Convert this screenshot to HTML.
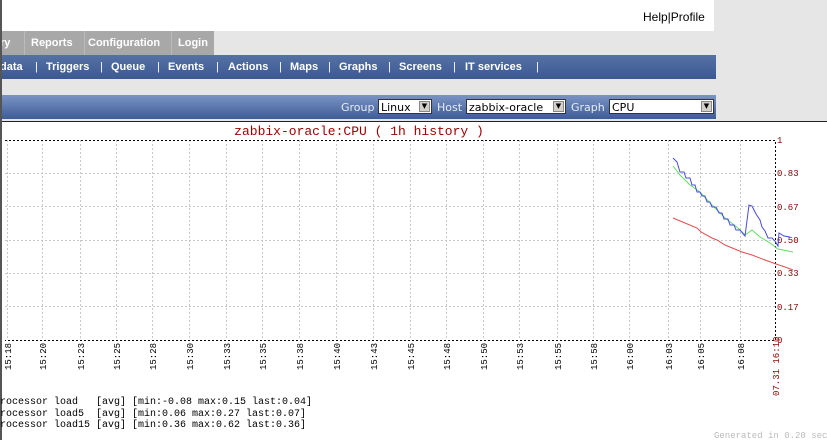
<!DOCTYPE html>
<html><head><style>
body{margin:0;width:827px;height:440px;overflow:hidden;background:#fff;position:relative;font-family:"Liberation Sans",sans-serif}
.a{position:absolute}
.nav{position:absolute;font-size:11px;font-weight:bold;color:#fff;white-space:nowrap;top:61px}
.tab{position:absolute;font-size:11px;font-weight:bold;color:#fff;white-space:nowrap;top:37px}
.sp{position:absolute;top:61px;font-size:11px;color:#fff}
.sel{position:absolute;top:99px;height:15px;background:#fff;border:1px solid #333;font-size:11px;font-family:"DejaVu Sans",sans-serif;line-height:15px;padding-left:2px;box-sizing:border-box}
.sel i{position:absolute;right:1px;top:1px;width:11px;height:11px;background:#d4d0c8;border:1px solid #888;box-sizing:border-box;font-style:normal;font-size:7px;line-height:9px;text-align:center;color:#000}
.lbl{position:absolute;top:101px;font-size:11px;color:#e8ecf4;font-family:"DejaVu Sans",sans-serif}
</style></head><body>
<div class="a" style="left:0;top:0;width:827px;height:122px;background:#e6e6e6"></div>
<div class="a" style="left:0;top:0;width:714px;height:31px;background:#fff"></div>
<div class="a" style="left:643px;top:10px;font-size:12px;color:#000">Help|Profile</div>
<div class="a" style="left:0;top:31px;width:214px;height:24px;background:#a8a8a8"></div>
<div class="a" style="left:24px;top:31px;width:1px;height:24px;background:#bbb"></div>
<div class="a" style="left:84px;top:31px;width:1px;height:24px;background:#bbb"></div>
<div class="a" style="left:171px;top:31px;width:1px;height:24px;background:#bbb"></div>
<div class="tab" style="left:0">ry</div>
<div class="tab" style="left:31px">Reports</div>
<div class="tab" style="left:88px">Configuration</div>
<div class="tab" style="left:178px">Login</div>
<div class="a" style="left:0;top:55px;width:716px;height:24px;background:linear-gradient(#5571a4,#3b5a92)"></div>
<div class="nav" style="left:0">data</div><div class="sp" style="left:35px">|</div>
<div class="nav" style="left:46px">Triggers</div><div class="sp" style="left:100px">|</div>
<div class="nav" style="left:111px">Queue</div><div class="sp" style="left:157px">|</div>
<div class="nav" style="left:168px">Events</div><div class="sp" style="left:216px">|</div>
<div class="nav" style="left:228px">Actions</div><div class="sp" style="left:279px">|</div>
<div class="nav" style="left:290px">Maps</div><div class="sp" style="left:328px">|</div>
<div class="nav" style="left:339px">Graphs</div><div class="sp" style="left:388px">|</div>
<div class="nav" style="left:399px">Screens</div><div class="sp" style="left:453px">|</div>
<div class="nav" style="left:465px">IT services</div><div class="sp" style="left:536px">|</div>
<div class="a" style="left:0;top:95px;width:716px;height:24px;background:linear-gradient(#7a94c4,#3d5d96)"></div>
<div class="lbl" style="left:341px">Group</div>
<div class="sel" style="left:378px;width:54px">Linux<i>▼</i></div>
<div class="lbl" style="left:437px">Host</div>
<div class="sel" style="left:466px;width:100px">zabbix-oracle<i>▼</i></div>
<div class="lbl" style="left:571px">Graph</div>
<div class="sel" style="left:609px;width:105px">CPU<i>▼</i></div>
<div class="a" style="left:0;top:121px;width:827px;height:1px;background:#222"></div>
<div class="a" style="left:0;top:0;width:2px;height:440px;background:#555"></div>
<svg class="a" style="left:0;top:0" width="827" height="440" font-family="Liberation Mono,monospace">
<text x="359" y="135" font-size="13" fill="#900" text-anchor="middle">zabbix-oracle:CPU ( 1h history )</text>
<g stroke="#c8c8c8" stroke-dasharray="2,2" stroke-width="1">
<path d="M5 173.5H775M5 206.5H775M5 240.5H775M5 273.5H775M5 306.5H775"/>
<path d="M7.5 140V340M42.5 140V340M80.5 140V340M116.5 140V340M152.5 140V340M189.5 140V340M226.5 140V340M262.5 140V340M299.5 140V340M336.5 140V340M373.5 140V340M410.5 140V340M446.5 140V340M483.5 140V340M519.5 140V340M557.5 140V340M593.5 140V340M629.5 140V340M668.5 140V340M700.5 140V340M740.5 140V340"/>
</g>
<path d="M5 140.5H775.5V340.5H5" fill="none" stroke="#000" stroke-dasharray="2,2"/>
<g font-size="9" fill="#800000">
<text x="777" y="143">1</text><text x="777" y="176">0.83</text><text x="777" y="210">0.67</text><text x="777" y="243">0.50</text><text x="777" y="276">0.33</text><text x="777" y="310">0.17</text><text x="777" y="343">0</text>
</g>
<g font-size="9" fill="#000">
<text transform="translate(11,370) rotate(-90)">15:18</text>
<text transform="translate(46,370) rotate(-90)">15:20</text>
<text transform="translate(84,370) rotate(-90)">15:23</text>
<text transform="translate(120,370) rotate(-90)">15:25</text>
<text transform="translate(156,370) rotate(-90)">15:28</text>
<text transform="translate(193,370) rotate(-90)">15:30</text>
<text transform="translate(230,370) rotate(-90)">15:33</text>
<text transform="translate(266,370) rotate(-90)">15:35</text>
<text transform="translate(303,370) rotate(-90)">15:38</text>
<text transform="translate(340,370) rotate(-90)">15:40</text>
<text transform="translate(377,370) rotate(-90)">15:43</text>
<text transform="translate(414,370) rotate(-90)">15:45</text>
<text transform="translate(450,370) rotate(-90)">15:48</text>
<text transform="translate(487,370) rotate(-90)">15:50</text>
<text transform="translate(523,370) rotate(-90)">15:53</text>
<text transform="translate(561,370) rotate(-90)">15:55</text>
<text transform="translate(597,370) rotate(-90)">15:58</text>
<text transform="translate(633,370) rotate(-90)">16:00</text>
<text transform="translate(672,370) rotate(-90)">16:03</text>
<text transform="translate(704,370) rotate(-90)">16:05</text>
<text transform="translate(744,370) rotate(-90)">16:08</text>
<text transform="translate(779,396) rotate(-90)" fill="#900">07.31 16:10</text>
</g>
<polyline fill="none" stroke="#e05050" points="673,218 685,223 697,228 701,232 712,238 717,240 725,245 742,252 752,255 765,260 776,264 785,267 793,270"/>
<polyline fill="none" stroke="#60e060" points="673,166 680,175 690,185 700,192 712,205 725,218 738,228 745,235 752,230 760,237 770,243 778,249 793,252"/>
<polyline fill="none" stroke="#4a4ae0" points="673,158 677,162 680,172 684,172 686,178 690,178 692,185 695,185 697,192 700,192 702,196 705,196 707,202 710,202 712,207 716,207 719,213 722,213 724,219 728,219 730,225 734,225 736,230 740,230 745,236 749,205 752,206 756,214 760,220 762,227 765,231 768,238 772,238 775,241 778,246 779,233 784,236 790,237"/>
</svg>
<div class="a" style="left:0;top:397px;font-family:'Liberation Mono',monospace;font-size:10px;line-height:11.5px;white-space:pre;color:#000">rocessor load   [avg] [min:-0.08 max:0.15 last:0.04]
rocessor load5  [avg] [min:0.06 max:0.27 last:0.07]
rocessor load15 [avg] [min:0.36 max:0.62 last:0.36]</div>
<div class="a" style="left:714px;top:431px;font-family:'Liberation Mono',monospace;font-size:9px;color:#bbb;white-space:nowrap">Generated in 0.20 sec</div>
</body></html>
